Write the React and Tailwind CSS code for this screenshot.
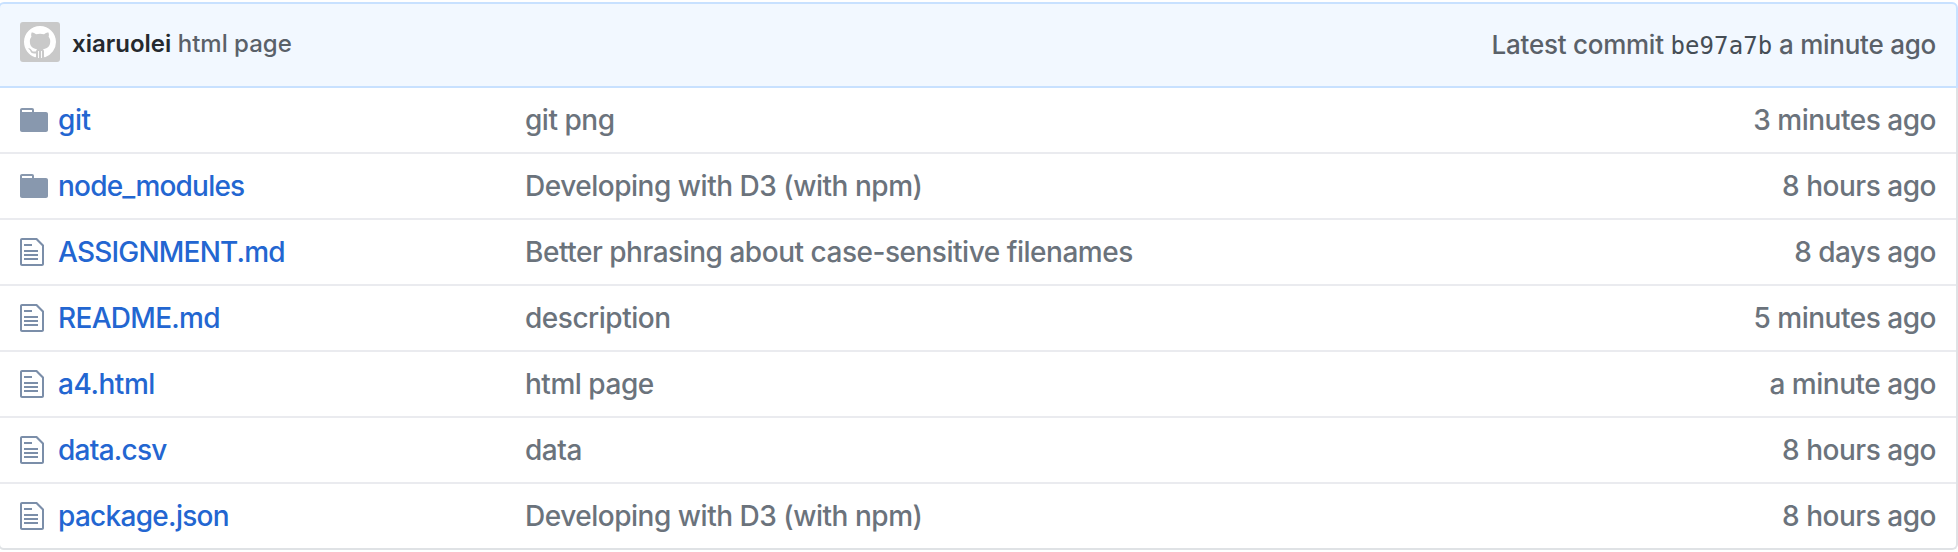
const files = [
  { type: "dir", name: "git", tracking: "tracking-[-0.4px]", message: "git png", age: "3 minutes ago" },
  { type: "dir", name: "node_modules", tracking: "tracking-[-0.8px]", message: "Developing with D3 (with npm)", age: "8 hours ago" },
  { type: "file", name: "ASSIGNMENT.md", tracking: "tracking-[-0.8px]", message: "Better phrasing about case-sensitive filenames", age: "8 days ago" },
  { type: "file", name: "README.md", tracking: "tracking-[-0.7px]", message: "description", age: "5 minutes ago" },
  { type: "file", name: "a4.html", tracking: "tracking-[-0.45px]", message: "html page", age: "a minute ago" },
  { type: "file", name: "data.csv", tracking: "tracking-[-0.75px]", message: "data", age: "8 hours ago" },
  { type: "file", name: "package.json", tracking: "tracking-[-0.7px]", message: "Developing with D3 (with npm)", age: "8 hours ago" },
];

function Avatar() {
  return (
    <svg viewBox="0 0 40 40" className="size-10 shrink-0 rounded-[3px] bg-[#c9c9c9]">
      <path
        transform="translate(4 4) scale(2)"
        fill="#fff"
        d="M8 0C3.58 0 0 3.58 0 8c0 3.54 2.29 6.53 5.47 7.59.4.07.55-.17.55-.38 0-.19-.01-.82-.01-1.49-2.01.37-2.53-.49-2.69-.94-.09-.23-.48-.94-.82-1.13-.28-.15-.68-.52-.01-.53.63-.01 1.08.58 1.23.82.72 1.21 1.87.87 2.33.66.07-.52.28-.87.51-1.07-1.78-.2-3.64-.89-3.64-3.95 0-.87.31-1.59.82-2.15-.08-.2-.36-1.02.08-2.12 0 0 .67-.21 2.2.82.64-.18 1.32-.27 2-.27.68 0 1.36.09 2 .27 1.53-1.04 2.2-.82 2.2-.82.44 1.1.16 1.92.08 2.12.51.56.82 1.27.82 2.15 0 3.07-1.87 3.75-3.65 3.95.29.25.54.73.54 1.48 0 1.07-.01 1.93-.01 2.2 0 .21.15.46.55.38A8.013 8.013 0 0016 8c0-4.42-3.58-8-8-8z"
      />
      <path d="M18.5 29v7M21.5 29v7" stroke="#fff" strokeWidth="0.9" />
    </svg>
  );
}

function FolderIcon() {
  return (
    <svg viewBox="0 0 14 16" className="h-8 w-7" fill="#8898ae">
      <path fillRule="evenodd" d="M13 4H7V3c0-.66-.31-1-1-1H1c-.55 0-1 .45-1 1v10c0 .55.45 1 1 1h12c.55 0 1-.45 1-1V5c0-.55-.45-1-1-1zM6 4H1V3h5v1z" />
    </svg>
  );
}

function FileIcon() {
  return (
    <svg viewBox="0 0 12 16" className="h-8 w-6" fill="#7b8ea9">
      <path fillRule="evenodd" d="M6 5H2V4h4v1zM2 8h7V7H2v1zm0 2h7V9H2v1zm0 2h7v-1H2v1zm10-7.5V14c0 .55-.45 1-1 1H1c-.55 0-1-.45-1-1V2c0-.55.45-1 1-1h7.5L12 4.5zM11 5L8 2H1v12h10V5z" />
    </svg>
  );
}

export default function App() {
  return (
    <div className="h-[552px] w-full overflow-hidden bg-white pt-0.5 font-['Inter','Liberation_Sans',sans-serif] font-[450]">
      <div className="-ml-0.5 w-[1960px]">
        <header className="flex h-[86px] items-start justify-between rounded-t-[6px] border-2 border-[#c8e1ff] bg-[#f2f8ff] px-5">
          <div className="flex items-start gap-3 pt-[18px] text-2xl text-[#5a6169]">
            <Avatar />
            <p className="pt-0.5 leading-10 whitespace-nowrap">
              <span className="font-semibold text-[#25292e]">xiaruolei</span>{" "}
              <span>html page</span>
            </p>
          </div>
          <p className="pt-[21px] text-[26px] leading-10 tracking-[-0.25px] whitespace-nowrap text-[#5a6169]">
            <span>Latest commit </span>
            <span className="font-['DejaVu_Sans_Mono',monospace] text-2xl tracking-[0.1px] text-[#454d55]">be97a7b</span>
            <span> a minute ago</span>
          </p>
        </header>
        <ul className="rounded-b-[6px] border-2 border-t-0 border-[#dfe2e5]">
          {files.map((f) => (
            <li key={f.name} className="flex h-[66px] items-center border-b-2 border-[#eaebef] px-5 text-[28px] last:h-16 last:border-b-0">
              <div className="w-[38px] shrink-0">{f.type === "dir" ? <FolderIcon /> : <FileIcon />}</div>
              <a className="w-[467px] shrink-0 text-[#2366d1]"><span className={f.tracking}>{f.name}</span></a>
              <p className="flex-1 tracking-[-0.48px] text-[#6b737c]"><span>{f.message}</span></p>
              <time className="tracking-[-0.48px] text-[#6b737c]">{f.age}</time>
            </li>
          ))}
        </ul>
      </div>
    </div>
  );
}
